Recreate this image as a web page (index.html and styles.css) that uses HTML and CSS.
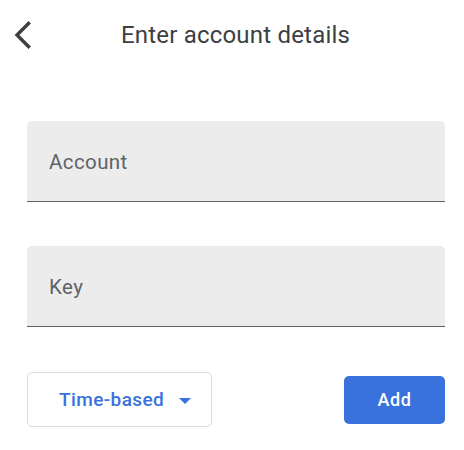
FILE: index.html
```html
<!DOCTYPE html>
<html>
<head>
<meta charset="utf-8">
<link rel="stylesheet" href="styles.css">
</head>
<body>
<div class="page">
  <header class="header">
    <button class="back" aria-label="Back">
      <svg width="18" height="28" viewBox="0 0 18 28"><polyline points="15.5,2.5 4,14 15.5,25.5" fill="none" stroke="#3c4043" stroke-width="3.4" stroke-linecap="square"/></svg>
    </button>
    <h1 class="title">Enter account details</h1>
  </header>
  <main class="form">
    <div class="field"><span class="placeholder">Account</span></div>
    <div class="field"><span class="placeholder">Key</span></div>
    <div class="actions">
      <button class="select">Time-based <span class="caret"></span></button>
      <button class="add">Add</button>
    </div>
  </main>
</div>
</body>
</html>
```
FILE: styles.css
```css
html, body {
  margin: 0;
  padding: 0;
  background: #ffffff;
}
body {
  font-family: Roboto, "Noto Sans", Arial, sans-serif;
  color: #3c4043;
}
.page {
  width: 464px;
  height: 450px;
  position: relative;
}
.header {
  height: 70px;
  display: flex;
  align-items: center;
  justify-content: center;
  position: relative;
}
.back {
  position: absolute;
  left: 13px;
  top: 21px;
  padding: 0;
  border: 0;
  background: none;
  width: 20px;
  height: 28px;
  display: flex;
}
.title {
  margin: 0;
  font-size: 24px;
  font-weight: 400;
  color: #3c4043;
  padding-left: 7px;
  letter-spacing: 0.2px;
}
.form {
  padding: 51px 19px 0 27px;
  display: flex;
  flex-direction: column;
  gap: 45px;
}
.field {
  height: 81px;
  box-sizing: border-box;
  background: #ececec;
  border-radius: 5px 5px 0 0;
  border-bottom: 1.5px solid #5f6368;
  display: flex;
  align-items: center;
  padding-left: 22px;
}
.field + .field {
  margin-top: -1px;
}
.placeholder {
  font-size: 20.5px;
  color: #5f6368;
  padding-top: 1px;
  letter-spacing: 0.4px;
}
.actions {
  display: flex;
  align-items: center;
  justify-content: space-between;
}
.select {
  width: 185px;
  height: 55px;
  box-sizing: border-box;
  border: 1px solid #dadce0;
  border-radius: 5px;
  background: #fff;
  color: #3a72dd;
  font-family: inherit;
  font-size: 19px;
  font-weight: 500;
  letter-spacing: 0.4px;
  display: flex;
  align-items: center;
  padding: 0 0 0 31px;
  gap: 15px;
}
.caret {
  width: 0;
  height: 0;
  border-left: 6px solid transparent;
  border-right: 6px solid transparent;
  border-top: 6px solid #3a72dd;
  margin-top: 2px;
}
.add {
  width: 101px;
  height: 48px;
  border: 0;
  border-radius: 5px;
  background: #3a72dd;
  color: #ffffff;
  font-family: inherit;
  font-size: 18px;
  font-weight: 500;
  letter-spacing: 0.6px;
  padding: 0;
}
```
